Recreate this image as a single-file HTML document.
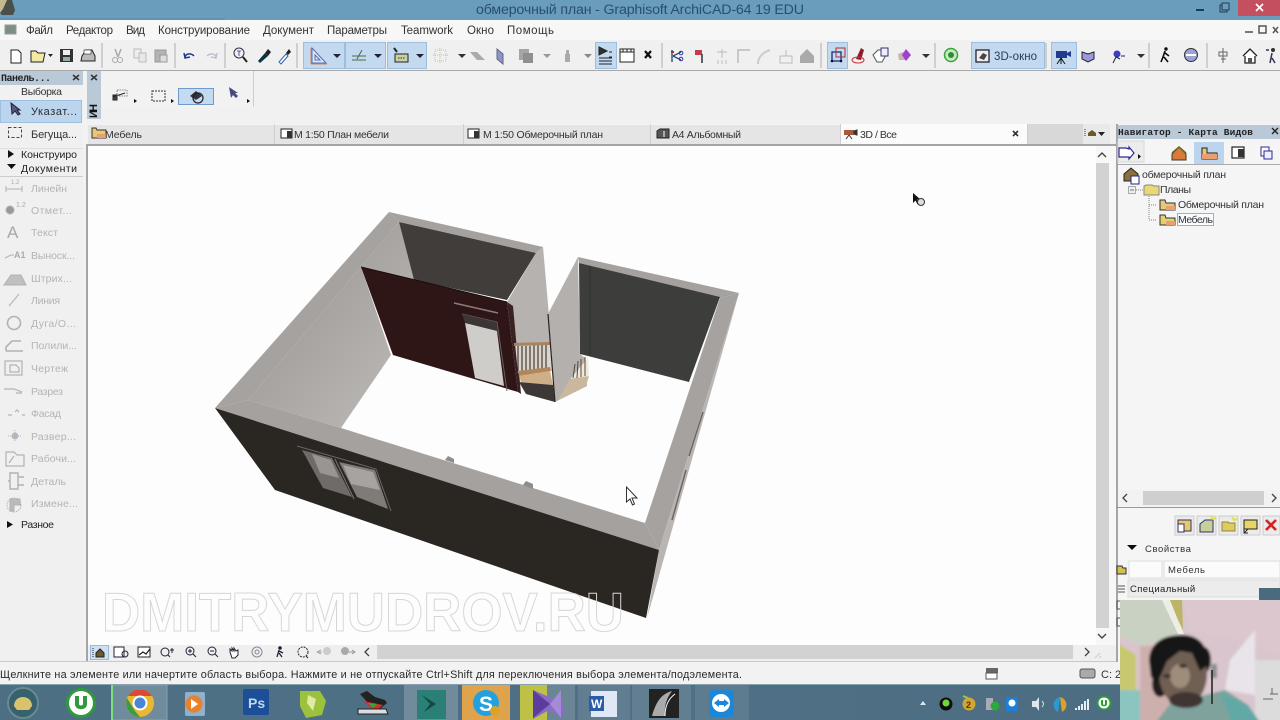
<!DOCTYPE html>
<html lang="ru"><head><meta charset="utf-8"><title>ArchiCAD</title>
<style>
html,body{margin:0;padding:0;background:#f0f0f0;width:1280px;height:720px;overflow:hidden}
svg{display:block;font-family:"Liberation Sans","DejaVu Sans",sans-serif}
svg.root{filter:blur(.3px)}
text{font-size:11px;fill:#2a2a2a}
.m{font-size:11.5px;fill:#333}
.g{fill:#b4b4b4;font-size:10.5px}
.b{font-family:"Liberation Mono","DejaVu Sans Mono",monospace;font-weight:bold;font-size:10px;fill:#222}
.t{font-size:10.5px;fill:#333}
</style></head><body>
<svg class="root" width="1280" height="720" viewBox="0 0 1280 720" xmlns="http://www.w3.org/2000/svg">
<defs>
<filter id="b1" x="-10%" y="-10%" width="120%" height="120%"><feGaussianBlur stdDeviation="0.3"/></filter>
<filter id="b2" x="-20%" y="-20%" width="140%" height="140%"><feGaussianBlur stdDeviation="1.4"/></filter>
<linearGradient id="tb" x1="0" y1="0" x2="1" y2="0"><stop offset="0" stop-color="#4d6f84"/><stop offset=".5" stop-color="#4f7086"/><stop offset="1" stop-color="#4b6c80"/></linearGradient>
<linearGradient id="lw" x1="0" y1="0" x2="1" y2="1"><stop offset="0" stop-color="#a7a4a1"/><stop offset=".45" stop-color="#a7a4a1"/><stop offset="1" stop-color="#bfbcba"/></linearGradient>
</defs>

<!-- base -->
<rect width="1280" height="720" fill="#f0f0f0"/>
<rect y="0" width="1280" height="20" fill="#6a9cbb"/>
<rect y="18" width="225" height="2" fill="#5f93b3"/>
<rect y="20" width="1280" height="20" fill="#f7f7f7"/>
<rect y="40" width="1280" height="30" fill="#f0f0f0"/>
<rect y="70" width="1280" height="1" fill="#a8a8a8"/>
<rect y="71" width="1280" height="53" fill="#f1f1f1"/>

<!-- title -->
<path d="M0 0h12l3 10-2 5H2l-2-2z" fill="#4a4f4a" filter="url(#b1)"/>
<path d="M0 0h7L3 9 0 13z" fill="#c2b98e" filter="url(#b1)"/>
<text x="476" y="14" style="font-size:14.2px;fill:#28506e" textLength="328">обмерочный план - Graphisoft ArchiCAD-64 19 EDU</text>
<rect x="1196" y="9" width="8" height="2" fill="#1d3c52"/>
<rect x="1220" y="5" width="7" height="7" fill="none" stroke="#1d3c52"/><rect x="1222" y="3" width="7" height="7" fill="#6a9cbb" stroke="#1d3c52"/>
<rect x="1238" y="0" width="42" height="16" fill="#c4505f"/>
<path d="M1256 4l7 7m0-7l-7 7" stroke="#fff" stroke-width="1.6"/>

<!-- menu -->
<rect x="5" y="25" width="11" height="9" fill="#7d8f82" stroke="#999"/>
<g class="menu">
<text class="m" x="26" y="34" textLength="27">Файл</text>
<text class="m" x="66" y="34" textLength="47">Редактор</text>
<text class="m" x="126" y="34" textLength="19">Вид</text>
<text class="m" x="158" y="34" textLength="92">Конструирование</text>
<text class="m" x="263" y="34" textLength="51">Документ</text>
<text class="m" x="327" y="34" textLength="60">Параметры</text>
<text class="m" x="401" y="34" textLength="52">Teamwork</text>
<text class="m" x="467" y="34" textLength="27">Окно</text>
<text class="m" x="507" y="34" textLength="47">Помощь</text>
</g>
<rect x="1245" y="31" width="8" height="2" fill="#777"/><rect x="1259" y="26" width="7" height="7" fill="none" stroke="#555" stroke-width="1.5"/>
<path d="M1273 27l5 6m0-6l-5 6" stroke="#555" stroke-width="1.5"/>

<!-- toolbar highlights -->
<g fill="#c2d9f0" stroke="#9dbddd">
<rect x="303.500" y="42.500" width="41" height="26"/><rect x="345.500" y="42.500" width="40" height="26"/><rect x="387.500" y="42.500" width="39" height="26"/>
<rect x="595.500" y="42.500" width="21" height="26"/>
<rect x="827.500" y="42.500" width="20" height="26"/>
<rect x="971.500" y="42.500" width="73" height="26"/>
<rect x="1051.500" y="42.500" width="25" height="26"/>
</g>
<g stroke="#c4c4c4" stroke-width="1.500">
<path d="M102 43v25M175 43v25M225 43v25M297 43v25M662 43v25M821 43v25M935 43v25M1046 43v25M1149 43v25M1207 43v25"/>
</g>

<!-- toolbar icons -->
<g filter="url(#b1)">
<path d="M11 50h7l3 3v10H11z" fill="#fff" stroke="#222"/>
<path d="M31 61V51h5l2 2h7l-2 9H31z" fill="#f3e9a4" stroke="#222"/><path d="M48 54h5l-2.500 3z" fill="#222"/>
<rect x="60" y="49" width="13" height="13" fill="#333"/><rect x="63" y="50" width="7" height="5" fill="#eee"/><rect x="63" y="57" width="7" height="4" fill="#9aa"/>
<path d="M82 56l4-6h6l3 6v5H81z" fill="#bbb" stroke="#222"/><rect x="84" y="50" width="7" height="4" fill="#fff" stroke="#222" stroke-width=".6"/>
<path d="M115 49l3 8m3-8l-3 8" stroke="#aaa" stroke-width="1.500" fill="none"/><circle cx="115" cy="60" r="2.500" fill="none" stroke="#aaa"/><circle cx="120" cy="60" r="2.500" fill="none" stroke="#aaa"/>
<rect x="134" y="49" width="7" height="9" fill="#eee" stroke="#bbb"/><rect x="139" y="53" width="7" height="9" fill="#e8e8e8" stroke="#bbb"/>
<rect x="155" y="50" width="11" height="12" fill="#b4b4b4" stroke="#999"/><rect x="160" y="55" width="7" height="7" fill="#ddd" stroke="#999"/>
<path d="M185 58c0-5 6-5 9-2M184 53l1 5 5-1" fill="none" stroke="#1a3a90" stroke-width="1.500"/>
<path d="M216 58c0-5-6-5-9-2M217 53l-1 5-5-1" fill="none" stroke="#b5bccb" stroke-width="1.300"/>
<circle cx="239" cy="53" r="5" fill="#eef" stroke="#333"/><path d="M243 57l4 5" stroke="#222" stroke-width="2"/><path d="M237 51h4M239 51v5" stroke="#336" stroke-width=".8"/>
<path d="M258 61l7-8 3 3-8 7z" fill="#134" /><path d="M265 53l3-4 3 3-3 4z" fill="#222"/>
<path d="M279 62l7-8 2 2-7 8z" fill="#fff" stroke="#36a"/><path d="M286 53l3-4 2 3-3 3z" fill="#222"/>
<!-- active tools -->
<path d="M312 48v15h14z M315 55v5h5z" fill="#dfe9f6" stroke="#5a6ab0"/><path d="M311 64h16" stroke="#d08868"/><path d="M311 48v16" stroke="#d08868"/>
<path d="M333 54h8l-4 4z M374 54h8l-4 4z M416 54h8l-4 4z" fill="#223"/>
<path d="M352 56h14M352 60h14M362 50l-5 9" stroke="#4a6a4a" fill="none"/>
<path d="M394 48l3 4" stroke="#222" stroke-width="2"/><rect x="395" y="54" width="13" height="8" fill="#c8d0a0" stroke="#222"/><path d="M398 58h7" stroke="#333" stroke-dasharray="1.500 1"/>
<g stroke="#c0c0a8" fill="none" stroke-dasharray="1 1"><rect x="435" y="50" width="11" height="11"/><path d="M440 48v15M433 55h15"/></g>
<path d="M458 54h8l-4 4z" fill="#333"/>
<path d="M470 52h7l8 8h-8z" fill="#aaa"/>
<path d="M497 49l6 5v10l-6-5z" fill="#8a94d0" stroke="#667"/>
<rect x="519" y="49" width="10" height="11" fill="#a5a5a5"/><rect x="523" y="53" width="10" height="10" fill="#8f8f8f"/>
<path d="M543 54h8l-4 4z" fill="#999"/>
<path d="M565 54h5v8h-5z M566 50h3v4h-3z" fill="#aaa"/>
<path d="M584 54h8l-4 4z" fill="#888"/>
<path d="M599 47l8 4-8 4zM599 58h13M599 61h13M599 64h13" fill="#333" stroke="#222" stroke-width="1"/><path d="M609 52h3M609 57h3" stroke="#222"/>
<rect x="620" y="49" width="14" height="13" fill="#fff" stroke="#222"/><path d="M620 52h14M623 49v3M627 49v3M631 49v3" stroke="#222"/>
<path d="M645 51l6 7m0-7l-6 7" stroke="#111" stroke-width="2.200"/>
<path d="M672 50v12M673 56l8-4m-8 4l8 4" stroke="#136" fill="none" stroke-width="1.200"/><circle cx="681" cy="53" r="1.800" fill="none" stroke="#33a"/><circle cx="681" cy="59" r="1.800" fill="none" stroke="#33a"/><path d="M671 52h3" stroke="#c22" stroke-width="2"/>
<path d="M695 50h7v5h-7z" fill="#c43a4d"/><path d="M702 54v9" stroke="#333" stroke-width="1.500"/>
<path d="M722 49v9M717 52h10M718 60v4M722 60v4M726 60v4" stroke="#bbb" fill="none"/>
<path d="M738 63V50h12" fill="none" stroke="#bbb" stroke-width="1.500"/>
<path d="M758 64c0-8 6-12 12-14" fill="none" stroke="#ccc" stroke-width="2"/>
<path d="M780 56h12v7h-12zM786 50v6" fill="none" stroke="#bbb"/>
<path d="M800 56l7-7 7 7v7h-14z" fill="#aaa"/>
<rect x="832" y="52" width="9" height="9" fill="none" stroke="#1c2a7a" stroke-width="1.300"/><rect x="836" y="48" width="9" height="9" fill="none" stroke="#a33" stroke-width="1"/><circle cx="832" cy="61" r="1.300" fill="#113"/><circle cx="841" cy="61" r="1.300" fill="#113"/>
<path d="M856 59l5-11 3 2-3 10z" fill="#8c1c2c"/><ellipse cx="858" cy="60" rx="6" ry="3" fill="none" stroke="#c33"/>
<path d="M873 55l5-5h8v5l-4 7h-5z" fill="#fff" stroke="#555"/><rect x="881" y="48" width="7" height="8" fill="#eef" stroke="#336"/>
<path d="M898 54l8-3v9h-7z" fill="#c7b3b3"/><path d="M906 49l5 6-5 6-4-6z" fill="#a03fd0"/>
<path d="M922 54h8l-4 4z" fill="#333"/>
<circle cx="951" cy="55" r="6.500" fill="#c8eac0" stroke="#3aa53a" stroke-width="1.500"/><circle cx="951" cy="55" r="3" fill="#2d8a3a"/>
<rect x="976" y="50" width="13" height="12" fill="#eee" stroke="#223" stroke-width="1.300"/><path d="M979 58l4-5 4 2-3 5z" fill="#444"/>
<text x="994" y="60" style="font-size:11.500px;fill:#27405a" textLength="43">3D-окно</text>
<path d="M1056 51h11v7h-11z" fill="#223a8a"/><path d="M1067 53l4-2v6l-4-2z" fill="#223a8a"/><path d="M1061 58l-4 6m4-6v6m0-6l4 6" stroke="#111"/>
<path d="M1082 52l6 2 6-2v7l-6 3-6-3z" fill="#9a9ad6" stroke="#223"/>
<circle cx="1117" cy="54" r="3.500" fill="#3c3cc0"/><path d="M1113 63l3-6 4 2M1121 56h4" stroke="#223" fill="none"/>
<path d="M1137 54h8l-4 4z" fill="#333"/>
<circle cx="1166" cy="49" r="1.700" fill="#111"/><path d="M1165 51l-2 6-2 5m3-5l4 5m-3-9l4 3" stroke="#111" stroke-width="1.600" fill="none"/>
<circle cx="1191" cy="55" r="6.500" fill="#9aa4d6" stroke="#333"/><path d="M1186 55h10" stroke="#fff" stroke-width="2"/>
<path d="M1223 48v15M1219 52h8v4h-8z" stroke="#666" fill="#eee"/><path d="M1221 59h5" stroke="#666"/>
<path d="M1243 56l7-7 7 7M1245 56v7h10v-7" fill="#fff" stroke="#222" stroke-width="1.300"/><rect x="1248" y="58" width="4" height="5" fill="#555"/>
<circle cx="1273" cy="50" r="2" fill="#333"/><path d="M1272 53l-1 5-1 5m2-5l3 5M1266 50h3" stroke="#335" stroke-width="1.500" fill="none"/>
</g>

<!-- left tool panel -->
<rect x="0" y="71" width="83" height="14" fill="#b9c9d8"/>
<text class="b" x="1" y="81" textLength="50">Панель...</text>
<path d="M73 75l6 5m0-5l-6 5" stroke="#333" stroke-width="1.500"/>
<rect x="83" y="71" width="4" height="590" fill="#f2f2f2"/>
<text x="21" y="95" style="font-size:10.500px;fill:#333" textLength="41">Выборка</text>
<rect x="0.500" y="100.500" width="81" height="22" fill="#bcd5ee" stroke="#9fbfdf"/>
<path d="M11 103l1 11 3-3 3 4 2-1-3-4h3z" fill="#5a5a80" stroke="#223"/>
<text x="31" y="115" style="font-size:11px;fill:#2e2e2e" textLength="46">Указат...</text>
<rect x="8.500" y="127.500" width="13" height="10" fill="none" stroke="#444" stroke-dasharray="3 2"/>
<text x="31" y="138" style="font-size:11px;fill:#333" textLength="46">Бегуща...</text>
<path d="M8 150l6 4-6 4z M7 164h9l-4.500 5z M7 521l6 3.500-6 3.500z" fill="#111"/>
<text x="21" y="158" style="font-size:10.500px;fill:#222" textLength="56">Конструиро</text>
<text x="21" y="172" style="font-size:10.500px;fill:#222" textLength="56">Документи</text>
<rect x="0" y="176" width="83" height="1" fill="#ccc"/>
<rect x="0" y="148" width="83" height="1" fill="#e0e0e0"/>
<g>
<text class="g" x="31" y="192" textLength="36">Линейн</text>
<text class="g" x="31" y="214" textLength="41">Отмет...</text>
<text class="g" x="31" y="236" textLength="27">Текст</text>
<text class="g" x="31" y="259" textLength="44">Выноск...</text>
<text class="g" x="31" y="282" textLength="41">Штрих...</text>
<text class="g" x="31" y="304" textLength="29">Линия</text>
<text class="g" x="31" y="327" textLength="45">Дуга/О...</text>
<text class="g" x="31" y="349" textLength="46">Полили...</text>
<text class="g" x="31" y="372" textLength="37">Чертеж</text>
<text class="g" x="31" y="395" textLength="32">Разрез</text>
<text class="g" x="31" y="417" textLength="30">Фасад</text>
<text class="g" x="31" y="440" textLength="45">Развер...</text>
<text class="g" x="31" y="462" textLength="45">Рабочи...</text>
<text class="g" x="31" y="485" textLength="35">Деталь</text>
<text class="g" x="31" y="507" textLength="47">Измене...</text>
</g>
<text x="21" y="528" style="font-size:10.500px;fill:#222" textLength="33">Разное</text>
<g filter="url(#b1)" fill="none" stroke="#b2b2b2">
<path d="M6 189h16M6 186v6M22 186v6"/><text x="11" y="184" style="font-size:6px;fill:#aaa;stroke:none">1.2</text>
<circle cx="10" cy="210" r="4" fill="#999"/><text x="16" y="207" style="font-size:7px;fill:#aaa;stroke:none">1.2</text>
<text x="7" y="238" style="font-size:17px;fill:#a8a8a8;stroke:none">A</text>
<path d="M5 258l6-3h3"/><text x="14" y="258" style="font-size:9px;fill:#aaa;stroke:none;font-weight:bold">A1</text>
<path d="M4 285l7-10h10l5 10z" fill="#c0c0c0"/>
<path d="M9 306l10-12"/>
<circle cx="14" cy="323" r="6.500" stroke-width="1.600"/>
<path d="M6 351v-4l6-6h9M6 351h17" stroke-width="1.600"/>
<path d="M5 361h17v14H5z M10 365h6l3 3v4h-9z" stroke-width="1.200"/>
<path d="M4 389h10l8 3M16 393h6" stroke-width="1.200"/>
<path d="M8 415h4M15 412l2-2 2 2M22 415h3" stroke-width="1.200"/>
<circle cx="15" cy="436" r="3" fill="#b8b0dd" stroke="#bbb"/><path d="M15 430v12M8 436h14" stroke-dasharray="1 1"/>
<path d="M6 466v-14h8l3 3h7v11z M9 463l5-7" stroke-width="1.200"/>
<path d="M10 473h8v16h-8zM10 481h-2M18 477h6M18 485h6" stroke-width="1.400"/>
<circle cx="14" cy="505" r="7" stroke-dasharray="1.500 1"/><path d="M10 499h10v6h-6v6h-4z" fill="#bbb"/>
</g>

<!-- info box -->
<rect x="87" y="71" width="14" height="48" fill="#b9c9d8"/>
<rect x="101" y="71" width="152" height="36" fill="#f2f2f2"/>
<rect x="253" y="71" width="1" height="36" fill="#ccc"/>
<path d="M91 75l6 5m0-5l-6 5" stroke="#333" stroke-width="1.500"/>
<text x="0" y="0" transform="translate(97,118) rotate(-90)" style="font-size:11px;font-weight:bold;fill:#111" textLength="14">ИН</text>
<g filter="url(#b1)">
<path d="M113 97l12-4M113 95h4v5h-4z" stroke="#222" fill="#444"/><rect x="117" y="90" width="10" height="6" fill="none" stroke="#888" stroke-dasharray="1.500 1"/>
<path d="M134 99l3 2-3 2z M171 99l3 2-3 2z M247 99l3 2-3 2z" fill="#111"/>
<rect x="152" y="91" width="13" height="10" fill="none" stroke="#333" stroke-dasharray="2 1"/>
<rect x="178.500" y="88.500" width="35" height="16" fill="#c4daf0" stroke="#6f9bcd"/>
<path d="M190 96l6-5 6 5-6 4z" fill="#334"/><circle cx="198" cy="98" r="5" fill="none" stroke="#222" stroke-width="1.200"/>
<path d="M229 87l2 11 2-3 3 3 2-2-3-3h3z" fill="#4a4a80"/>
</g>

<!-- tab bar -->
<rect x="88" y="124" width="1027" height="21" fill="#e5e5e5"/>
<rect x="88" y="124" width="1027" height="1" fill="#f5f5f5"/>
<rect x="841" y="124" width="186" height="21" fill="#fbfbfb"/>
<rect x="1027" y="124" width="56" height="21" fill="#d8d8d8"/>
<rect x="1083" y="124" width="27" height="21" fill="#e9e9e9"/>
<rect x="1110" y="124" width="6" height="22" fill="#f0f0f0"/>
<rect x="87" y="144" width="1029" height="2" fill="#a4a4a4"/>
<rect x="86" y="144" width="2" height="518" fill="#a4a4a4"/>
<path d="M274.500 124v20M463.500 124v20M650.500 124v20M840.500 124v20M1027.500 124v20" stroke="#cfcfcf"/>
<path d="M92 138v-10h4l1 2h9v8z" fill="#e8c878" stroke="#333"/><path d="M97 134h9v4h-9z" fill="#e8a070"/>
<text class="t" x="105" y="138" textLength="37">Мебель</text>
<rect x="281" y="129" width="11" height="9" fill="#fff" stroke="#222"/><rect x="287" y="131" width="5" height="7" fill="#333"/>
<text class="t" x="294" y="138" textLength="95">М 1:50 План мебели</text>
<rect x="468" y="129" width="11" height="9" fill="#fff" stroke="#222"/><rect x="474" y="131" width="5" height="7" fill="#333"/>
<text class="t" x="483" y="138" textLength="120">М 1:50 Обмерочный план</text>
<path d="M657 138v-7l3-2h9v9z" fill="#555" stroke="#222"/><path d="M664 131v6" stroke="#fff"/>
<text class="t" x="672" y="138" textLength="69">А4 Альбомный</text>
<rect x="844" y="130" width="10" height="5" fill="#a85a3a"/><path d="M854 131l3-1v5l-3-1zM849 135l-3 4m3-4l3 4" fill="#333" stroke="#333"/>
<text class="t" x="860" y="138" textLength="37">3D / Все</text>
<path d="M1013 131l5 5m0-5l-5 5" stroke="#333" stroke-width="1.600"/>
<path d="M1085 129v7" stroke="#333" stroke-dasharray="1 1"/><path d="M1088 133l4-3 4 3v3h-8z" fill="#6a5a2a"/><path d="M1098 132h7l-3.500 4z" fill="#222"/>

<!-- viewport -->
<rect x="88" y="146" width="1008" height="499" fill="#fdfdfd"/>
<rect x="1096" y="146" width="20" height="499" fill="#f7f7f7"/>
<rect x="1096" y="163" width="13" height="465" fill="#d2d2d2"/>
<path d="M1098 157l4-4 4 4M1098 634l4 4 4-4" fill="none" stroke="#444" stroke-width="1.400"/>

<!-- 3D model -->
<g filter="url(#b1)">
<polygon points="215,408 389,212 399,222 248,400" fill="#a5a29f"/>
<polygon points="248,400 399,222 414,280 361,267 391,355 341,428" fill="url(#lw)"/>
<polygon points="389,212 543,247 536,253 399,222" fill="#a5a19e"/>
<polygon points="399,222 536,253 507,300 414,280" fill="#403e3b"/>
<polygon points="536,253 543,247 549,316 551,345 515,345 507,302" fill="#b5b2b0"/>
<!-- red wall -->
<polygon points="361,267 507,302 518,392 393,355" fill="#2f1619"/>
<path d="M361 267L507 302" stroke="#1a0f10" stroke-width="1"/>
<polygon points="507,302 513,306 521,394 518,392" fill="#3a2024"/>
<!-- door -->
<path d="M454 303L498 313" stroke="#8a7c7c" stroke-width="1.500"/>
<path d="M462 314L497 322L507 391" stroke="#6d5c5c" stroke-width="1" fill="none"/>
<polygon points="462,314 496,322 498,332 465,323" fill="#3a3634"/>
<polygon points="465,323 497,331 504,386 475,378" fill="#cfcdca"/>
<!-- balcony -->
<polygon points="515,344 550,343 552,371 518,373" fill="#d9d5cd"/>
<g stroke="#3a2e28" stroke-width="1.100"><path d="M518 346v25M522 346v25M526 346v25M530 346v24M534 345v24M538 345v24M542 345v24M546 345v23"/></g>
<polygon points="514,343 550,342 550,345 514,346" fill="#a8835d"/>
<polygon points="518,371 550,367 551,371 519,376" fill="#b3855a"/>
<polygon points="519,376 550,371 553,385 521,382" fill="#cfaf88"/>
<polygon points="519,382 553,385 555,402 526,394" fill="#3c3835"/>
<!-- second back wall -->
<polygon points="578,257 739,293 720,298 579,263" fill="#a5a19e"/>
<polygon points="579,263 720,297 689,382 588,356 580,354" fill="#3d3c3a"/>
<path d="M590 266v90" stroke="#2f2e2c"/>
<polygon points="578,257 580,354 585,358 587,386 555,402 548,314" fill="#b3b0ae"/>
<path d="M548 314l7 88" stroke="#2a2422" stroke-width="1.200"/>
<polygon points="571,378 588,358 589,376 571,379" fill="#efe8dc"/>
<g stroke="#5a4634"><path d="M573 378l2-14M577 378l1-17M581 377v-18M585 376v-19"/></g>
<polygon points="569,380 589,376 586,386 558,400" fill="#cbb79c"/>
<!-- right wall -->
<polygon points="739,293 720,298 645,523 659,550" fill="#a6a29f"/>
<polygon points="739,293 659,550 647,618" fill="#b8b5b2"/>
<path d="M703 412l-14 44M686 470l-14 50" stroke="#5a504c" stroke-width="1.400" opacity=".8"/>
<!-- front wall -->
<polygon points="215,408 248,400 341,428 645,523 659,550" fill="#a5a19e"/>
<polygon points="445,460 448,456 454,459 454,463" fill="#8f8c8a"/>
<polygon points="523,485 526,481 533,484 533,489" fill="#8f8c8a"/>
<polygon points="215,408 659,550 646,618 275,490" fill="#2b2523"/>
<!-- window -->
<path d="M297 446L376 469L391 511" fill="none" stroke="#6a6563" stroke-width="1"/>
<polygon points="302,450 332,458 352,497 323,488" fill="#6f6a68"/>
<polygon points="339,462 375,470 388,509 357,497" fill="#7f7b78"/>
<polygon points="312,454 331,460 339,478 320,473" fill="#989592"/>
<polygon points="343,465 373,472 380,490 351,484" fill="#a6a3a0"/>
<path d="M335 459l19 40" stroke="#7a7572" stroke-width="1"/>
</g>

<!-- cursors -->
<path d="M626.500 487l0 15 3.500-3 2.500 6 2-1-2.500-6 5 0z" fill="#fff" stroke="#333" stroke-width="1"/>
<path d="M913 193v10l2.500-2.500 2 4 1.500-1-2-4 3.500 0z" fill="#111"/><circle cx="921" cy="202" r="3.500" fill="#ddd" stroke="#333"/>

<!-- watermark -->
<text x="102" y="631" textLength="522" lengthAdjust="spacingAndGlyphs" style="font-size:55px;fill:none;stroke:#d6d6d6;stroke-width:1;font-weight:bold">DMITRYMUDROV.RU</text>

<!-- bottom bar viewport -->
<rect x="88" y="645" width="1028" height="16" fill="#efefef"/>
<rect x="377" y="645" width="696" height="14" fill="#d2d2d2"/>
<rect x="90.500" y="645.500" width="18" height="14" fill="#cfe0f2" stroke="#9bb9da"/>
<g fill="none" stroke="#223" filter="url(#b1)">
<path d="M93 648v9" stroke-dasharray="1 1"/><path d="M96 653l4-4 4 4v4h-8z" fill="#6a5a2a" stroke="#222"/>
<rect x="114" y="647" width="10" height="10" fill="#fff"/><circle cx="125" cy="654" r="3"/>
<rect x="138" y="647" width="12" height="10" fill="#fff"/><path d="M139 655l4-3 3 2 4-5" stroke="#222" stroke-width="1.300"/>
<circle cx="165" cy="652" r="4"/><path d="M168 655l2 2M172 648v5M170 650h4"/>
<circle cx="190" cy="651" r="4"/><path d="M193 654l3 3M188 651h4M190 649v4"/>
<circle cx="212" cy="651" r="4"/><path d="M215 654l3 3M210 651h4"/>
<path d="M230 652v-3l2 2v-3l2 3v-3l2 3 2-1v5l-3 3h-3z" fill="#fff"/>
<circle cx="257" cy="652" r="5" stroke="#889"/><circle cx="257" cy="652" r="2" stroke="#889"/>
<circle cx="280" cy="648" r="1.300" fill="#111"/><path d="M279 650l-2 7m2-4l3 4m-3-6l4 2" stroke-width="1.300"/>
<circle cx="303" cy="652" r="5" stroke-dasharray="2 1"/><path d="M306 656l2 2"/>
</g>
<path d="M317 652h5M321 650l-4 2 4 2" fill="none" stroke="#aaa"/><circle cx="327" cy="651" r="4" fill="#ccc"/>
<circle cx="345" cy="651" r="4" fill="#aaa"/><path d="M349 652h5M352 650l3 2-3 2" fill="none" stroke="#999"/>
<path d="M369 648l-4 4 4 4M1085 648l4 4-4 4" fill="none" stroke="#444" stroke-width="1.300"/>
<path d="M1095 658l5-5M1099 658l2-2" stroke="#ccc"/>

<!-- status -->
<rect y="661" width="1280" height="1" fill="#c9c9c9"/>
<rect y="662" width="1280" height="22" fill="#f2f2f2"/>
<text x="0" y="678" style="font-size:10.800px;fill:#2a2a2a" textLength="742">Щелкните на элементе или начертите область выбора. Нажмите и не отпускайте Ctrl+Shift для переключения выбора элемента/подэлемента.</text>
<rect x="986" y="668" width="12" height="5" fill="#666"/><rect x="986" y="673" width="11" height="6" fill="#fff" stroke="#555"/>
<rect x="1080" y="669" width="15" height="9" rx="2" fill="#aaa" stroke="#555"/>
<text x="1101" y="678" style="font-size:11px;fill:#333">C: 2</text>

<!-- taskbar -->
<rect y="684" width="1280" height="36" fill="url(#tb)"/>
<rect y="684" width="1280" height="1" fill="#86a1b2"/>
<rect x="112" y="685" width="55" height="35" fill="#6f8b9c" stroke="#89a0ae"/>
<rect x="111" y="685" width="2" height="35" fill="#7ce07c"/>
<rect x="404" y="685" width="54" height="35" fill="#6f8b9c"/>
<rect x="462" y="685" width="48" height="35" fill="#dfa34c"/>
<rect x="520" y="685" width="55" height="35" fill="#6a8596"/>
<rect x="520" y="685" width="27" height="35" fill="#c8c83c" opacity=".9"/>
<rect x="578" y="685" width="52" height="35" fill="#617e90"/>
<rect x="632" y="685" width="59" height="35" fill="#627f91"/>
<rect x="695" y="685" width="54" height="35" fill="#5f7c8e"/>
<g filter="url(#b1)">
<circle cx="23" cy="703" r="15" fill="#34626e" stroke="#6a8a90" stroke-width="2"/><path d="M14 706c0-12 18-12 18 0l-3 4h-12z" fill="#d8c36c"/>
<circle cx="81" cy="703" r="15" fill="#2e9a3a"/><circle cx="81" cy="703" r="12" fill="#fff"/><path d="M75 696v8c0 7 12 7 12 0v-8h-4v8c0 2-4 2-4 0v-8z" fill="#2e9a3a"/>
<circle cx="140" cy="703" r="14" fill="#e8b830"/><path d="M128 696a14 14 0 0 1 24 0h-12z" fill="#d64a3a"/><path d="M127 698l8 13 5 6a14 14 0 0 1-13-19z" fill="#3e9a4a"/><circle cx="140" cy="703" r="6.500" fill="#4a86d8" stroke="#fff" stroke-width="2"/>
<rect x="185" y="692" width="20" height="24" rx="2" fill="#8fb1cc"/><circle cx="194" cy="704" r="8.500" fill="#e8812c"/><path d="M191 699l7 5-7 5z" fill="#fff"/>
<rect x="243" y="689" width="26" height="26" rx="2" fill="#1c4f98"/><text x="248" y="708" style="font-size:14px;fill:#bcd8f4;font-weight:bold">Ps</text>
<path d="M300 691h20l6 10-4 14-16 3-6-12z" fill="#9cc23c"/><path d="M308 695l8 4-3 12-6-8z" fill="#dfeaa4"/>
<path d="M360 694l16 18 11-9-2-3-10-3-8-6z" fill="#222"/><path d="M363 701l20 4-8 7z" fill="#c33"/><path d="M358 709h28l2 5h-30z" fill="#ddd" stroke="#222"/><path d="M368 703l9 1-4 4z" fill="#3a3"/>
<rect x="417" y="690" width="29" height="29" fill="#2a8076"/><path d="M422 695l14 9-12 8 6-8z" fill="#134a45"/>
<circle cx="486" cy="703" r="13" fill="#20a0e0"/><text x="479" y="711" style="font-size:21px;fill:#fff;font-weight:bold">S</text><circle cx="495" cy="711" r="5" fill="#dca228"/>
<path d="M533 690l30 13 0-13v28l-14-8-16 9z" fill="#8a6cc8"/><path d="M533 690l17 14-17 14z" fill="#5a3c9c"/><path d="M561 690v28l-11-14z" fill="#a38cd4"/>
<rect x="591" y="691" width="26" height="26" fill="#dfe8f4"/><rect x="589" y="696" width="15" height="15" fill="#2a5ca8"/><text x="591" y="708" style="font-size:12px;fill:#fff;font-weight:bold">W</text>
<rect x="649" y="689" width="30" height="29" fill="#222"/><path d="M652 716c4-14 9-22 20-25-6 8-8 16-7 25z" fill="#aaa"/><path d="M665 716c0-10 3-17 10-22" stroke="#fff" fill="none"/>
<rect x="709" y="690" width="25" height="27" rx="3" fill="#1e86d8"/><circle cx="721" cy="703" r="9" fill="#fff"/><path d="M714 703l5-4v2h5v-2l5 4-5 4v-2h-5v2z" fill="#1e86d8"/>
<path d="M920 705l3-4 3 4z" fill="#dfe7ec"/>
<circle cx="946" cy="704" r="6.500" fill="#111"/><circle cx="946" cy="703" r="3.500" fill="#6fd63c"/>
<circle cx="969" cy="704" r="6.500" fill="#d2a632"/><path d="M963 696l5 2" stroke="#8ad03a" stroke-width="2"/><text x="966" y="708" style="font-size:9px;fill:#5a2c0a;font-weight:bold">2</text>
<path d="M986 698h7v12h-7z" fill="#aab"/><circle cx="995" cy="706" r="4.500" fill="#2fa83a"/>
<rect x="1006" y="697" width="12" height="14" rx="2" fill="#1a80d8"/><circle cx="1012" cy="703" r="3.500" fill="#fff"/>
<path d="M1032 701h4l3-4v14l-3-4h-4z" fill="#dde6ee"/><path d="M1042 701c2 2 2 4 0 6" stroke="#dde" fill="none"/>
<path d="M1060 697a8 8 0 0 0-2 15z" fill="#2a9ad0"/><path d="M1060 697a8 8 0 0 1 2 15z" fill="#d8a22c"/>
<g fill="#e6eef2"><rect x="1075" y="708" width="2" height="2"/><rect x="1078" y="706" width="2" height="4"/><rect x="1081" y="704" width="2" height="6"/><rect x="1084" y="701" width="2" height="9"/><rect x="1087" y="699" width="2" height="11"/></g>
<circle cx="1104" cy="703" r="7.500" fill="#2e9a3a"/><circle cx="1104" cy="703" r="5.500" fill="#fff"/><path d="M1101 700v4c0 3 6 3 6 0v-4h-2v4c0 1-2 1-2 0v-4z" fill="#2e9a3a"/>
</g>

<!-- navigator -->
<rect x="1116" y="124" width="164" height="538" fill="#f5f5f5"/>
<rect x="1116" y="124" width="2" height="538" fill="#a6a6a6"/>
<rect x="1118" y="125" width="162" height="14" fill="#b9c9d8"/>
<text class="b" x="1118" y="135" textLength="135" lengthAdjust="spacing" style="font-size:9.500px">Навигатор - Карта Видов</text>
<path d="M1272 128l6 6m0-6l-6 6" stroke="#222" stroke-width="1.400"/>
<rect x="1118" y="141" width="26" height="21" fill="#ececec" stroke="#d8d8d8"/>
<path d="M1119 148h7l3 1v-2l5 6-5 6v-2h-10z" fill="#fff" stroke="#2a2a90" stroke-width="1.200"/><path d="M1138 154l3 2.500-3 2.500z" fill="#111"/>
<rect x="1194" y="142" width="30" height="22" fill="#bcd5ee"/>
<path d="M1172 154l7-7 7 7v6h-14z" fill="#d87a3a" stroke="#3a3a2a"/><path d="M1172 153l7-6 7 6" fill="none" stroke="#6a6a2a" stroke-width="1.500"/>
<path d="M1202 159v-11h5v5h10v6z" fill="#e8c878" stroke="#222"/><path d="M1202 154h15v5h-15z" fill="#e8a070"/>
<rect x="1232" y="147" width="12" height="11" fill="#fff" stroke="#222" stroke-width="1.200"/><rect x="1238" y="149" width="6" height="8" fill="#333"/>
<rect x="1261" y="147" width="8" height="9" fill="#fff" stroke="#2a2a90"/><rect x="1264" y="151" width="8" height="8" fill="#eef" stroke="#2a2a90"/>
<rect x="1116" y="164" width="164" height="1" fill="#aaa"/>
<g filter="url(#b1)">
<path d="M1124 174l7-6 7 6v7h-14z" fill="#8a6f3a" stroke="#222"/><rect x="1131" y="176" width="8" height="8" fill="#fff" stroke="#228"/>
<rect x="1128.500" y="186.500" width="7" height="7" fill="#eee" stroke="#aaa"/><path d="M1130 190h4" stroke="#777"/>
<path d="M1144 195v-9l2-1h6l2 1h5v9z" fill="#e8d878" stroke="#888"/>
<path d="M1149 196v24M1149 205h8M1149 220h8M1136 190h7" stroke="#888" stroke-dasharray="1 1"/>
<path d="M1160 210v-10h5l1 3h9v7z" fill="#e8c878" stroke="#333"/><path d="M1166 206h9v4h-9z" fill="#e8a070"/>
<path d="M1160 225v-10h5l1 3h9v7z" fill="#e4d070" stroke="#333"/><path d="M1166 221h9v4h-9z" fill="#e8a070"/>
</g>
<text class="t" x="1142" y="178" textLength="84">обмерочный план</text>
<text class="t" x="1160" y="193" textLength="31">Планы</text>
<text class="t" x="1178" y="208" textLength="86">Обмерочный план</text>
<rect x="1177.500" y="213.500" width="36" height="12" fill="#f8fbff" stroke="#8fb4dc"/>
<text class="t" x="1178" y="223" textLength="35">Мебель</text>
<rect x="1118" y="490" width="162" height="16" fill="#f2f2f2"/>
<rect x="1143" y="491" width="121" height="14" fill="#cfcfcf"/>
<path d="M1127 494l-4 4 4 4M1272 494l4 4-4 4" fill="none" stroke="#444" stroke-width="1.300"/>
<rect x="1116" y="507" width="164" height="1" fill="#999"/>
<!-- nav bottom -->
<g filter="url(#b1)">
<rect x="1175" y="516" width="19" height="19" fill="#ebebeb" stroke="#ccc"/><rect x="1178" y="520" width="13" height="11" fill="#e8c86c" stroke="#336"/><rect x="1178" y="524" width="6" height="8" fill="#fff" stroke="#336"/>
<rect x="1197" y="516" width="19" height="19" fill="#ebebeb" stroke="#ccc"/><path d="M1200 532v-8l5-4h8v12z" fill="#c8d09a" stroke="#336"/><path d="M1211 516l2 3 3-1" stroke="#e6e03c" stroke-width="2" fill="none"/>
<rect x="1219" y="516" width="19" height="19" fill="#ebebeb" stroke="#ccc"/><path d="M1222 531v-9h6l1 1h6v8z" fill="#e0cc58" stroke="#884"/><path d="M1232 517l2 3 3-1" stroke="#e6e03c" stroke-width="2" fill="none"/>
<rect x="1241" y="516" width="19" height="19" fill="#ebebeb" stroke="#ccc"/><rect x="1244" y="520" width="13" height="9" fill="#e8d468" stroke="#222"/><path d="M1244 533l4-4M1244 529v4h4" stroke="#222" fill="none"/>
<rect x="1263" y="516" width="17" height="19" fill="#ebebeb" stroke="#ccc"/><path d="M1266 520l10 10m0-10l-10 10" stroke="#d82020" stroke-width="2.600"/>
<path d="M1127 545h10l-5 5z" fill="#111"/>
<path d="M1117 566h5l1 2h3v6h-9z" fill="#d2c050" stroke="#333"/>
<path d="M1118 586h7M1118 589h7M1118 592h7" stroke="#555"/>
</g>
<text x="1145" y="552" style="font-size:9.500px;fill:#333;letter-spacing:.6px">Свойства</text>
<rect x="1129" y="561" width="33" height="17" fill="#fbfbfb" stroke="#ddd"/>
<rect x="1164" y="561" width="116" height="17" fill="#fbfbfb" stroke="#ddd"/>
<text x="1168" y="573" style="font-size:9.500px;fill:#333;letter-spacing:.6px">Мебель</text>
<rect x="1128" y="580" width="152" height="17" fill="#ececec" stroke="#ddd"/>
<text x="1130" y="592" style="font-size:9.500px;fill:#222;letter-spacing:.4px">Специальный</text>
<rect x="1259" y="588" width="21" height="12" fill="#4a6a7e"/>
<rect x="1117" y="601" width="5" height="8" fill="none" stroke="#555"/>
<rect x="1117" y="618" width="5" height="8" fill="none" stroke="#555"/>

<!-- webcam -->
<svg x="1120" y="600" width="160" height="120" viewBox="0 0 160 120">
<rect width="160" height="120" fill="#d9c5cd"/>
<g filter="url(#b2)">
<rect x="-10" y="-10" width="180" height="140" fill="#d9c5cd"/>
<polygon points="-10,-10 45,-10 60,35 22,46 -10,32" fill="#c9d2c2"/>
<polygon points="60,-10 170,-10 170,60 120,40 70,30" fill="#dcc7cf"/>
<polygon points="110,60 135,30 135,95 105,90" fill="#e8e4ea"/>
<rect x="135" y="60" width="35" height="70" fill="#dcdcdc"/>
<rect x="20" y="46" width="62" height="84" fill="#cdb0ae"/>
<polygon points="-10,38 16,55 16,90 -10,90" fill="#c8c870"/>
<rect x="-10" y="90" width="30" height="40" fill="#8cc4c0"/>
<!-- shirt -->
<polygon points="30,130 50,104 105,90 128,105 145,130" fill="#7fa39c"/>
<polygon points="100,92 128,105 145,130 115,130" fill="#62a8a4"/>
<!-- headset -->
<ellipse cx="40" cy="84" rx="8" ry="13" fill="#221d1d"/>
<ellipse cx="84" cy="60" rx="7" ry="13" fill="#221d1d"/>
<rect x="91" y="64" width="6" height="14" fill="#8d8d8d"/>
<!-- face & hair -->
<ellipse cx="63" cy="74" rx="24" ry="32" fill="#6f5e52"/>
<path d="M29 60C30 42 44 35 62 35s27 12 26 30l-8 6-8-18-12-2-13 10-6 14-4 8-6-6z" fill="#191514"/>
<ellipse cx="60" cy="76" rx="10" ry="12" fill="#9f8d7c"/>
<ellipse cx="66" cy="100" rx="17" ry="8" fill="#3f3530"/>
<ellipse cx="47" cy="76" rx="4" ry="2" fill="#3a2e29"/><ellipse cx="63" cy="66" rx="4" ry="2" fill="#3a2e29"/>
</g>
<polygon points="42,0 50,0 64,34 58,34" fill="#f2f2ea" opacity=".85"/>
<polygon points="50,0 62,0 63,30 58,20" fill="#b4b050" opacity=".8"/>
<path d="M92 70v34" stroke="#2a2626" stroke-width="1.600"/>
<path d="M152 88v6M143 99h10M150 94h8" stroke="#666" stroke-width="1" filter="url(#b1)"/>
</svg>
</svg>
</body></html>
